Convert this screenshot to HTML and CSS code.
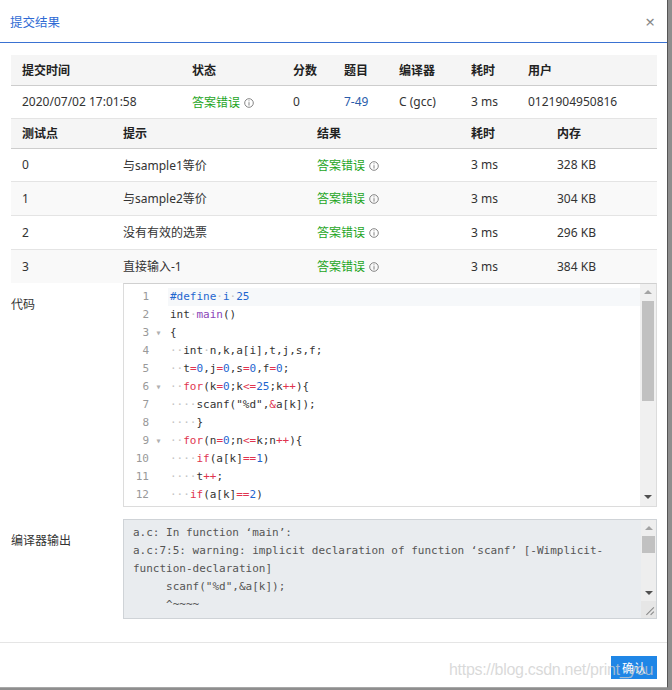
FILE: index.html
```html
<!DOCTYPE html>
<html lang="zh">
<head>
<meta charset="utf-8">
<link rel="stylesheet" href="styles.css">
</head>
<body>
<div class="modal">
  <div class="modal-header">
    <span class="title">提交结果</span>
    <span class="close">×</span>
  </div>
  <div class="modal-body">
    <table class="tbl t1">
      <colgroup>
        <col class="w170"><col class="w101"><col class="w51"><col class="w55"><col class="w72"><col class="w57"><col class="w140">
      </colgroup>
      <thead>
        <tr><th>提交时间</th><th>状态</th><th>分数</th><th>题目</th><th>编译器</th><th>耗时</th><th>用户</th></tr>
      </thead>
      <tbody>
        <tr>
          <td>2020/07/02 17:01:58</td>
          <td><span class="status">答案错误</span><svg class="info" viewBox="0 0 10 10"><circle cx="5" cy="5" r="4.3"/><line x1="5" y1="4.2" x2="5" y2="7.6"/><line x1="5" y1="2.4" x2="5" y2="3.3"/></svg></td>
          <td>0</td>
          <td><span class="link">7-49</span></td>
          <td>C (gcc)</td>
          <td>3 ms</td>
          <td>0121904950816</td>
        </tr>
      </tbody>
    </table>
    <table class="tbl t2">
      <colgroup>
        <col class="w101"><col class="w194"><col class="w154"><col class="w86"><col class="w111">
      </colgroup>
      <thead>
        <tr><th>测试点</th><th>提示</th><th>结果</th><th>耗时</th><th>内存</th></tr>
      </thead>
      <tbody>
        <tr><td>0</td><td>与sample1等价</td><td><span class="status">答案错误</span><svg class="info" viewBox="0 0 10 10"><circle cx="5" cy="5" r="4.3"/><line x1="5" y1="4.2" x2="5" y2="7.6"/><line x1="5" y1="2.4" x2="5" y2="3.3"/></svg></td><td>3 ms</td><td>328 KB</td></tr>
        <tr><td>1</td><td>与sample2等价</td><td><span class="status">答案错误</span><svg class="info" viewBox="0 0 10 10"><circle cx="5" cy="5" r="4.3"/><line x1="5" y1="4.2" x2="5" y2="7.6"/><line x1="5" y1="2.4" x2="5" y2="3.3"/></svg></td><td>3 ms</td><td>304 KB</td></tr>
        <tr><td>2</td><td>没有有效的选票</td><td><span class="status">答案错误</span><svg class="info" viewBox="0 0 10 10"><circle cx="5" cy="5" r="4.3"/><line x1="5" y1="4.2" x2="5" y2="7.6"/><line x1="5" y1="2.4" x2="5" y2="3.3"/></svg></td><td>3 ms</td><td>296 KB</td></tr>
        <tr><td>3</td><td>直接输入-1</td><td><span class="status">答案错误</span><svg class="info" viewBox="0 0 10 10"><circle cx="5" cy="5" r="4.3"/><line x1="5" y1="4.2" x2="5" y2="7.6"/><line x1="5" y1="2.4" x2="5" y2="3.3"/></svg></td><td>3 ms</td><td>384 KB</td></tr>
      </tbody>
    </table>

    <div class="field code-field">
      <div class="label">代码</div>
      <div class="editor">
        <div class="lines">
          <div class="line active"><span class="ln">1</span><span class="fold"></span><span class="code"><span class="b">#define</span><i class="ws">·</i><span class="b">i</span><i class="ws">·</i><span class="b">25</span></span></div>
          <div class="line"><span class="ln">2</span><span class="fold"></span><span class="code">int<i class="ws">·</i><span class="p">main</span>()</span></div>
          <div class="line"><span class="ln">3</span><span class="fold">▾</span><span class="code">{</span></div>
          <div class="line"><span class="ln">4</span><span class="fold"></span><span class="code"><i class="ws">··</i>int<i class="ws">·</i>n,k,a[i],t,j,s,f;</span></div>
          <div class="line"><span class="ln">5</span><span class="fold"></span><span class="code"><i class="ws">··</i>t<span class="r">=</span><span class="b">0</span>,j<span class="r">=</span><span class="b">0</span>,s<span class="r">=</span><span class="b">0</span>,f<span class="r">=</span><span class="b">0</span>;</span></div>
          <div class="line"><span class="ln">6</span><span class="fold">▾</span><span class="code"><i class="ws">··</i><span class="r">for</span>(k<span class="r">=</span><span class="b">0</span>;k<span class="r">&lt;=</span><span class="b">25</span>;k<span class="r">++</span>){</span></div>
          <div class="line"><span class="ln">7</span><span class="fold"></span><span class="code"><i class="ws">····</i>scanf("%d",<span class="r">&amp;</span>a[k]);</span></div>
          <div class="line"><span class="ln">8</span><span class="fold"></span><span class="code"><i class="ws">····</i>}</span></div>
          <div class="line"><span class="ln">9</span><span class="fold">▾</span><span class="code"><i class="ws">··</i><span class="r">for</span>(n<span class="r">=</span><span class="b">0</span>;n<span class="r">&lt;=</span>k;n<span class="r">++</span>){</span></div>
          <div class="line"><span class="ln">10</span><span class="fold"></span><span class="code"><i class="ws">····</i><span class="r">if</span>(a[k]<span class="r">==</span><span class="b">1</span>)</span></div>
          <div class="line"><span class="ln">11</span><span class="fold"></span><span class="code"><i class="ws">····</i>t<span class="r">++</span>;</span></div>
          <div class="line"><span class="ln">12</span><span class="fold"></span><span class="code"><i class="ws">···</i><span class="r">if</span>(a[k]<span class="r">==</span><span class="b">2</span>)</span></div>
        </div>
        <div class="scrollbar">
          <div class="arrow"><span class="tri-up"></span></div>
          <div class="track"><div class="thumb big"></div></div>
          <div class="arrow"><span class="tri-down"></span></div>
        </div>
      </div>
    </div>

    <div class="field out-field">
      <div class="label">编译器输出</div>
      <div class="output">
        <div class="out-text">a.c: In function ‘main’:
a.c:7:5: warning: implicit declaration of function ‘scanf’ [-Wimplicit-
function-declaration]
     scanf("%d",&amp;a[k]);
     ^~~~~</div>
        <div class="scrollbar small">
          <div class="arrow"><span class="tri-up"></span></div>
          <div class="track"><div class="thumb little"></div></div>
          <div class="arrow"><span class="tri-down"></span></div>
          <div class="resizer"><svg viewBox="0 0 14 14"><line x1="12" y1="5" x2="5" y2="12"/><line x1="12" y1="9" x2="9" y2="12"/></svg></div>
        </div>
      </div>
    </div>
  </div>
  <div class="modal-footer">
    <button class="btn">确认</button>
  </div>
  <div class="watermark">https://blog.csdn.net/print_you</div>
</div>
</body>
</html>
```

FILE: styles.css
```css
html, body {
  margin: 0;
  padding: 0;
}
body {
  background: #8e8e8e;
  font-family: "Noto Sans", "Noto Sans CJK SC", sans-serif;
  font-size: 12px;
  color: #333;
  width: 672px;
  height: 690px;
  overflow: hidden;
}
.modal {
  width: 667px;
  height: 687px;
  background: #fff;
  border-right: 1px solid #555;
  border-bottom: 1px solid #a8a8a8;
  position: relative;
  display: flex;
  flex-direction: column;
}
.modal-header {
  height: 42px;
  flex: none;
  border-bottom: 1px solid #3a72d2;
  display: flex;
  align-items: center;
  justify-content: space-between;
  padding: 0 12px 0 10px;
}
.title {
  color: #2e6ad4;
  font-size: 12.5px;
}
.close {
  color: #888;
  font-size: 17px;
  line-height: 1;
}
.modal-body {
  flex: 1;
  padding: 12px 10px 0 11px;
}
.tbl {
  width: 646px;
  border-collapse: collapse;
  table-layout: fixed;
}
.w170 { width: 170px; }
.w101 { width: 101px; }
.w51 { width: 51px; }
.w55 { width: 55px; }
.w72 { width: 72px; }
.w57 { width: 57px; }
.w140 { width: 140px; }
.w194 { width: 194px; }
.w154 { width: 154px; }
.w86 { width: 86px; }
.w111 { width: 111px; }
.tbl th {
  background: #f5f5f5;
  color: #222;
  font-weight: bold;
  text-align: left;
  height: 30px;
  padding: 0 0 0 11px;
  border-bottom: 1px solid #cdcdcd;
  box-sizing: border-box;
}
.tbl td {
  height: 32px;
  padding: 0 0 0 11px;
  white-space: nowrap;
}
.t2 tbody tr + tr td {
  height: 33px;
}
.t2 thead tr {
  border-top: 1px solid #e4e4e4;
}
.t2 tbody tr + tr {
  border-top: 1px solid #e4e4e4;
}
.t2 tbody tr:nth-child(even) td {
  background: #f9f9f9;
}
.status {
  color: #1ea51e;
}
.info {
  width: 10px;
  height: 10px;
  margin-left: 4px;
  vertical-align: -1px;
  fill: none;
  stroke: #777;
  stroke-width: 0.9;
}
.link {
  color: #2a5caa;
}

.field {
  display: flex;
}
.label {
  width: 112px;
  flex: none;
  color: #333;
}
.code-field .label {
  padding-top: 12px;
}
.editor {
  width: 532px;
  height: 222px;
  border: 1px solid #dcdcdc;
  border-top-color: #d0d0d0;
  display: flex;
  background: #fff;
}
.lines {
  flex: 1;
  padding-top: 4px;
  font-family: "DejaVu Sans Mono", "Liberation Mono", monospace;
  font-size: 11px;
  color: #333;
}
.line {
  display: flex;
  height: 18px;
  line-height: 18px;
}
.ln {
  width: 25px;
  text-align: right;
  color: #999;
  flex: none;
}
.fold {
  width: 19px;
  flex: none;
  text-align: center;
  color: #b0b0b0;
  font-size: 10px;
}
.code {
  flex: 1;
  padding-left: 2px;
  white-space: pre;
}
.line.active .code {
  background: #f6f8fa;
}
.ws {
  font-style: normal;
  color: #c4c4c4;
}
.b { color: #1f66cf; }
.p { color: #8a45b8; }
.r { color: #e0344f; }

.scrollbar {
  width: 16px;
  flex: none;
  background: #f0f0f0;
  display: flex;
  flex-direction: column;
}
.scrollbar .arrow {
  height: 17px;
  flex: none;
  display: flex;
  align-items: center;
  justify-content: center;
}
.scrollbar .track {
  flex: 1;
  padding: 0 2px;
}
.thumb {
  background: #c1c1c1;
}
.thumb.big {
  height: 100px;
}
.thumb.little {
  height: 17px;
}
.tri-up {
  width: 0;
  height: 0;
  border-left: 4px solid transparent;
  border-right: 4px solid transparent;
  border-bottom: 4px solid #a3a3a3;
}
.tri-down {
  width: 0;
  height: 0;
  border-left: 4px solid transparent;
  border-right: 4px solid transparent;
  border-top: 4px solid #505050;
}

.out-field {
  margin-top: 12px;
}
.out-field .label {
  padding-top: 12px;
}
.output {
  width: 532px;
  height: 98px;
  border: 1px solid #cfd3d7;
  background: #e9ecef;
  display: flex;
}
.out-text {
  flex: 1;
  padding: 4px 0 0 9px;
  font-family: "DejaVu Sans Mono", "Liberation Mono", monospace;
  font-size: 11px;
  line-height: 18px;
  color: #555;
  white-space: pre;
  overflow: hidden;
}
.scrollbar.small {
  width: 15px;
  background: #eeeeee;
}
.scrollbar.small .arrow {
  height: 16px;
}
.scrollbar.small .track {
  padding: 0 1px;
}
.resizer {
  height: 17px;
  flex: none;
  background: #e6e6e6;
}
.resizer svg {
  width: 15px;
  height: 17px;
  stroke: #888;
  stroke-width: 1;
}

.modal-footer {
  margin-top: auto;
  height: 45px;
  border-top: 1px solid #e5e5e5;
  display: flex;
  justify-content: flex-end;
  align-items: flex-start;
  padding: 13px 10px 0 0;
  box-sizing: border-box;
}
.btn {
  width: 46px;
  height: 23px;
  border: none;
  background: #1f86e6;
  color: #fff;
  font-family: "Noto Sans CJK SC", sans-serif;
  font-size: 12px;
  padding: 0;
}
.watermark {
  position: absolute;
  left: 449px;
  top: 661px;
  font-family: "Liberation Sans", Arial, sans-serif;
  font-size: 16px;
  color: rgba(205, 205, 205, 0.75);
  white-space: nowrap;
  letter-spacing: -0.3px;
}
```
